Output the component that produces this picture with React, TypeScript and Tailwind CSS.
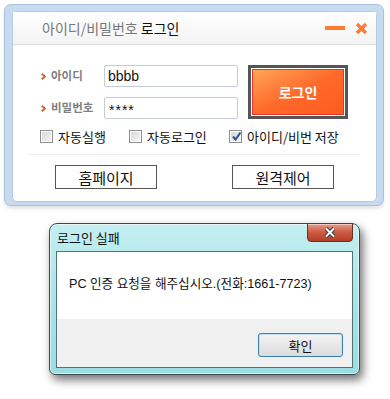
import React from 'react';

const KR = '"Noto Sans CJK KR", sans-serif';

function CheckBox({ checked }: { checked?: boolean }) {
  return (
    <span className="relative flex h-[13px] w-[13px] shrink-0 items-center justify-center border border-[#8e8f8f] bg-gradient-to-br from-[#d6d6d6] to-[#f7f7f7] shadow-[inset_0_0_0_1px_#ffffff]">
      {checked && (
        <svg width="11" height="11" viewBox="0 0 11 11" className="absolute left-[1px] top-[0px]">
          <path d="M2 5.5 L4.5 8.5 L9.5 1.5" fill="none" stroke="#2f4c9c" strokeWidth="2" />
        </svg>
      )}
    </span>
  );
}

function FieldLabel({ text }: { text: string }) {
  return (
    <div className="flex w-[64px] items-center gap-[5px] pl-[1px]">
      <svg width="5" height="7" viewBox="0 0 5 7">
        <path d="M0.8 0.8 L4 3.5 L0.8 6.2" fill="none" stroke="#c8602a" strokeWidth="1.8" />
      </svg>
      <span className="text-[11.5px] font-bold leading-none text-[#808080]">{text}</span>
    </div>
  );
}

function LoginWindow() {
  return (
    <div className="ml-[4px] mt-[4px] h-[202px] w-[380px] rounded-[7px] border border-[#a9c1dc] bg-[#c8daee] pb-[3px] pl-[7px] pr-[6px] pt-[6px] shadow-[0_3px_3px_rgba(0,0,0,0.1)]">
      <div className="flex h-full flex-col rounded-[5px] border border-[#b6cae2] bg-white">
        {/* title */}
        <div className="flex h-[33px] items-center border-b border-[#dcdcdc] bg-gradient-to-b from-white to-[#f3f3f3] pl-[29px] pr-[8px]">
          <span className="text-[14px] leading-none text-[#777777]">
            아이디/비밀번호 <span className="text-[#111111]">로그인</span>
          </span>
          <div className="ml-auto flex items-center gap-[10px]">
            <span className="h-[4px] w-[20px] bg-[#ff7a35]" />
            <svg width="13" height="13" viewBox="0 0 13 13">
              <path d="M2 2 L11 11 M11 2 L2 11" stroke="#ff7a35" strokeWidth="3.4" />
            </svg>
          </div>
        </div>

        {/* body */}
        <div className="flex flex-col pl-[27px]">
          <div className="mt-[20px] flex">
            <div className="flex flex-col gap-[10px]">
              <div className="flex items-center">
                <FieldLabel text="아이디" />
                <div className="flex h-[22px] w-[134px] items-center rounded-[2px] border border-[#c6ccd6] pl-[3px] text-[14px] text-[#111]" style={{ fontFamily: '"Liberation Sans", sans-serif' }}>
                  bbbb
                </div>
              </div>
              <div className="flex items-center">
                <FieldLabel text="비밀번호" />
                <div className="flex h-[22px] w-[134px] items-center rounded-[2px] border border-[#c6ccd6] pl-[4px] pt-[4px] text-[14px] tracking-[1px] text-[#111]" style={{ fontFamily: '"Liberation Sans", sans-serif' }}>
                  ****
                </div>
              </div>
            </div>
            <div className="ml-[10px] h-[54px] w-[100px] border-[3px] border-[#555555] bg-white p-px">
              <div className="flex h-full w-full items-center justify-center border border-[#e8342a] bg-gradient-to-br from-[#ffa455] via-[#ff6a2a] to-[#ff5a1e]">
                <span className="text-[14px] font-bold leading-none text-white">로그인</span>
              </div>
            </div>
          </div>

          <div className="mt-[11px] flex items-center text-[13px] leading-none text-[#111]">
            <div className="flex w-[89px] items-center gap-[5px]">
              <CheckBox />
              <span>자동실행</span>
            </div>
            <div className="flex w-[100px] items-center gap-[5px]">
              <CheckBox />
              <span>자동로그인</span>
            </div>
            <div className="flex items-center gap-[5px]">
              <CheckBox checked />
              <span>아이디/비번 저장</span>
            </div>
          </div>

          <div className="-ml-[11px] mt-[11px] h-px w-[331px] bg-[#ececec]" />

          <div className="mt-[10px] flex">
            <button className="ml-[15px] flex h-[24px] w-[102px] items-center justify-center border border-[#555555] bg-white text-[15px] leading-none text-[#111]">
              홈페이지
            </button>
            <button className="ml-[75px] flex h-[24px] w-[102px] items-center justify-center border border-[#555555] bg-white text-[15px] leading-none text-[#111]">
              원격제어
            </button>
          </div>
        </div>
      </div>
    </div>
  );
}

function ErrorDialog() {
  return (
    <div className="ml-[49px] mt-[17px] flex h-[152px] w-[311px] flex-col rounded-b-[6px] rounded-t-[8px] border border-[#38484c] bg-gradient-to-b from-[#c4eff1] via-[#a9e4e8] to-[#9bdde1] px-[6px] pb-[6px] shadow-[3px_5px_10px_rgba(0,0,0,0.55),inset_0_0_0_1px_rgba(255,255,255,0.6)]">
      <div className="flex h-[27px] items-start">
        <span className="self-center pl-px text-[13px] leading-none text-[#111]">로그인 실패</span>
        <div className="-mt-px ml-auto flex h-[19px] w-[46px] items-center justify-center rounded-b-[4px] border border-[#6e2e22] bg-gradient-to-b from-[#e59a88] via-[#cc5a42] to-[#b23e28] shadow-[inset_0_1px_0_rgba(255,255,255,0.5)]">
          <svg width="12" height="11" viewBox="0 0 12 11">
            <path d="M2 1.5 L10 9.5 M10 1.5 L2 9.5" stroke="#3a3a3a" strokeWidth="4" />
            <path d="M2 1.5 L10 9.5 M10 1.5 L2 9.5" stroke="#ffffff" strokeWidth="2" />
          </svg>
        </div>
      </div>
      <div className="flex flex-1 flex-col border border-[#4e7478]">
        <div className="flex h-[67px] items-center bg-white pl-[12px] pb-[2px]">
          <span className="text-[12.6px] leading-none text-[#111]" style={{ fontFamily: '"Liberation Sans", "Noto Sans CJK KR", sans-serif' }}>
            PC 인증 요청을 해주십시오.(전화:1661-7723)
          </span>
        </div>
        <div className="flex flex-1 items-start justify-end bg-[#f0f0f0] pr-[9px] pt-[14px]">
          <button className="flex h-[24px] w-[85px] items-center justify-center rounded-[3px] border border-[#3c7fb1] bg-gradient-to-b from-[#f4f4f4] to-[#dcdcdc] text-[13px] leading-none text-[#111] shadow-[inset_0_0_0_1px_#bfe3f7]">
            확인
          </button>
        </div>
      </div>
    </div>
  );
}

export default function App() {
  return (
    <div className="h-[399px] w-[390px] overflow-hidden bg-white" style={{ fontFamily: KR }}>
      <LoginWindow />
      <ErrorDialog />
    </div>
  );
}
